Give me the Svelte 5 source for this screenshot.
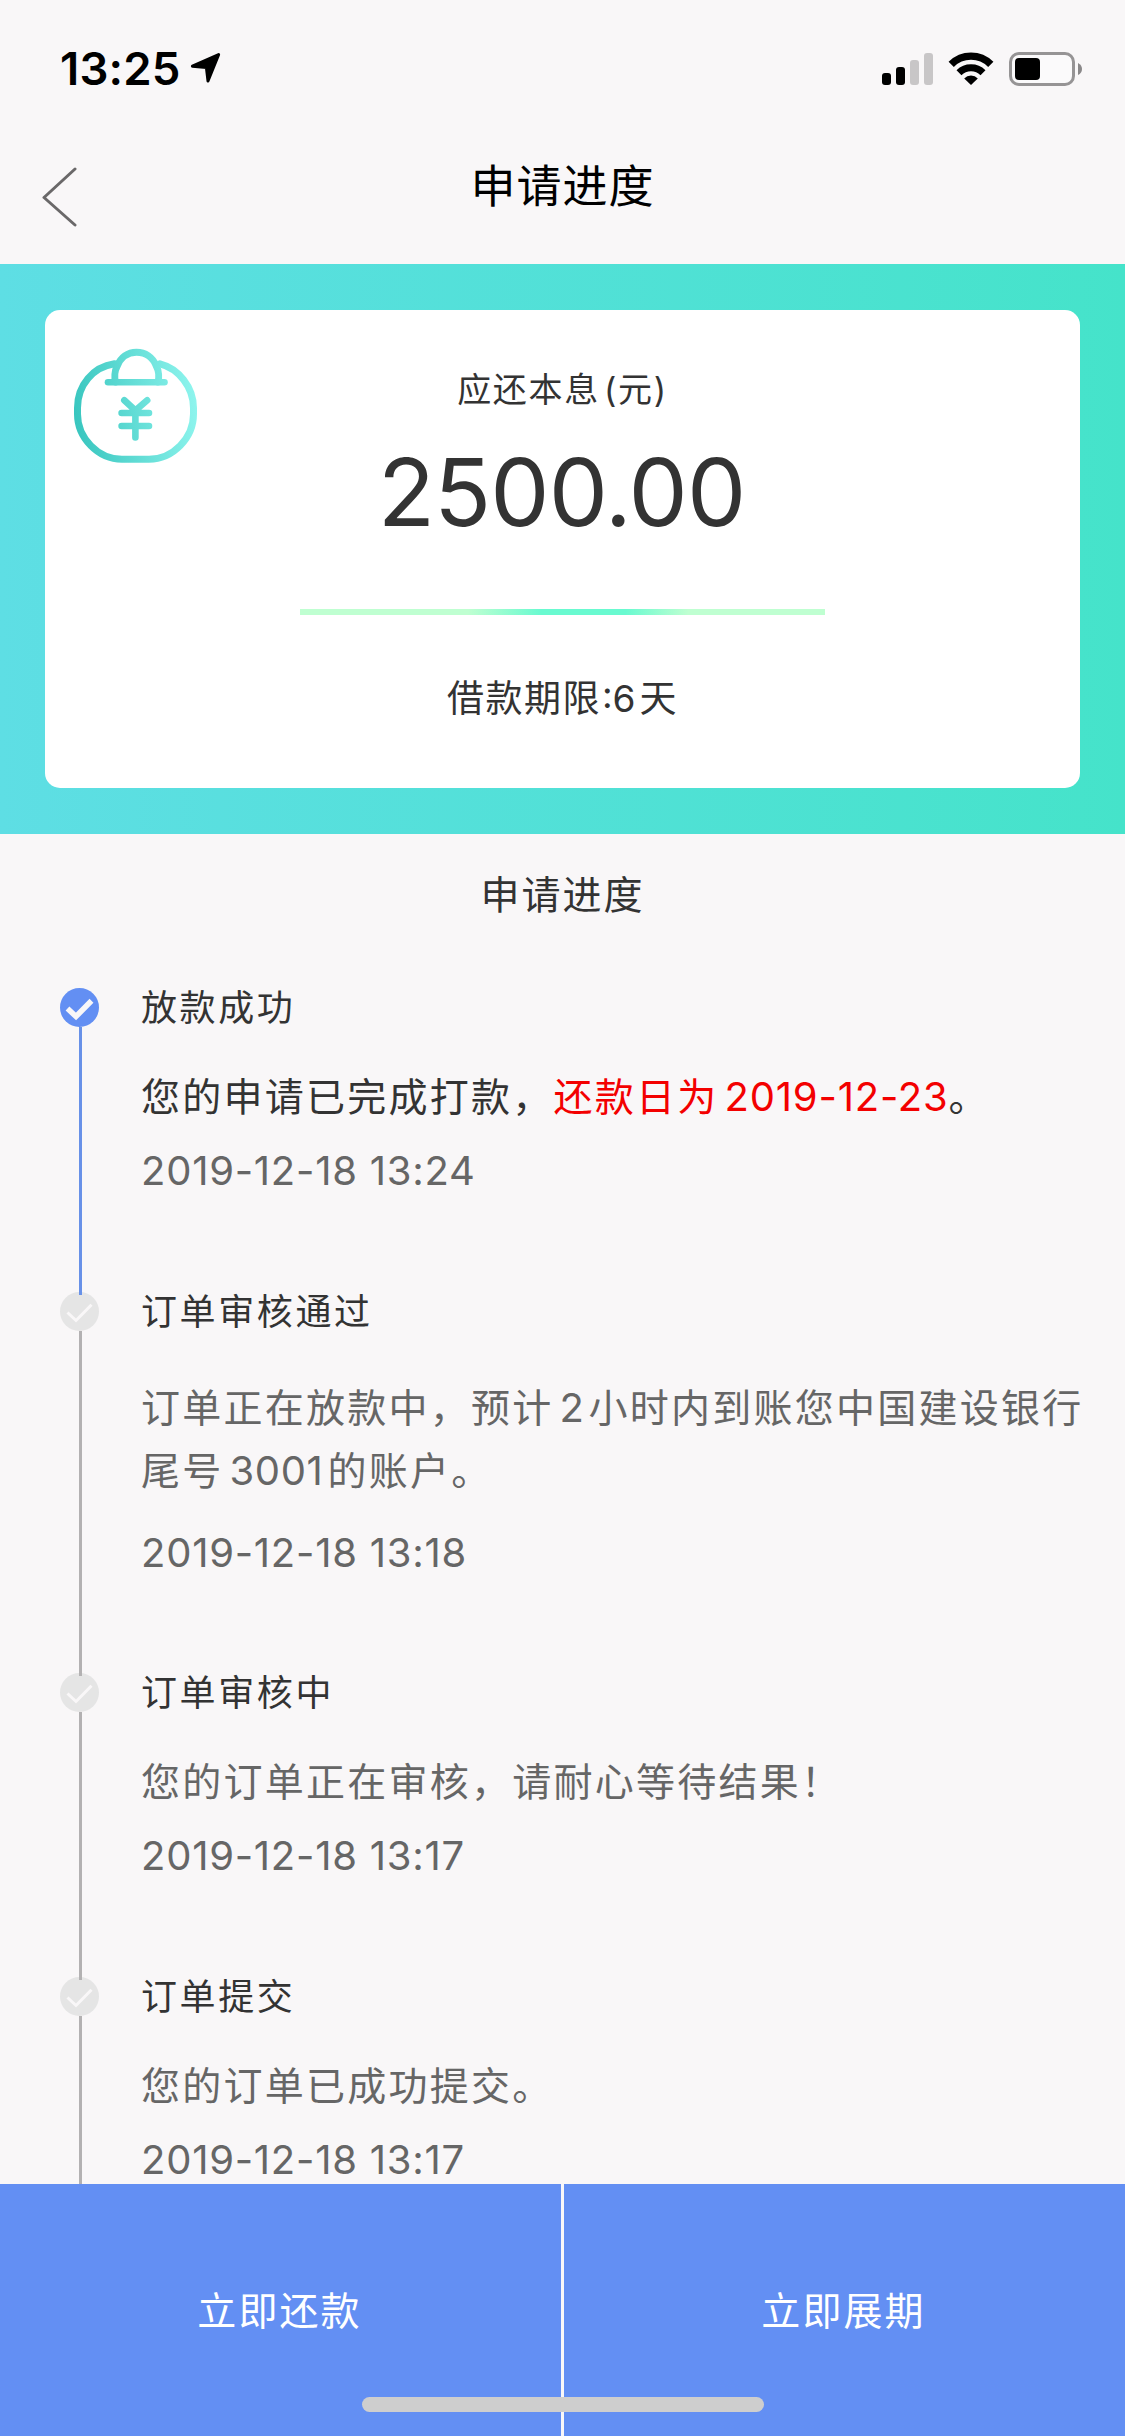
<script>
  const amount = '2500.00';
  const signal = [12, 18, 25, 32];

  const steps = [
    {
      title: '放款成功',
      done: true,
      lines: [
        [
          { text: '您的申请已完成打款，' },
          { text: '还款日为', hot: true },
          { text: '2019-12-23', num: true, hot: true, wide: true },
          { text: '。' }
        ]
      ],
      date: '2019-12-18 13:24'
    },
    {
      title: '订单审核通过',
      lines: [
        [
          { text: '订单正在放款中，预计' },
          { text: '2', num: true },
          { text: '小时内到账您中国建设银行' }
        ],
        [{ text: '尾号' }, { text: '3001', num: true }, { text: '的账户。' }]
      ],
      date: '2019-12-18 13:18'
    },
    {
      title: '订单审核中',
      lines: [[{ text: '您的订单正在审核，请耐心等待结果！' }]],
      date: '2019-12-18 13:17'
    },
    {
      title: '订单提交',
      lines: [[{ text: '您的订单已成功提交。' }]],
      date: '2019-12-18 13:17'
    }
  ];
</script>

<div class="screen" lang="zh-CN">
  <div class="status">
    <div class="clock">
      <span class="time">13:25</span>
      <svg class="locate" width="31" height="31" viewBox="0 0 31 31">
        <path d="M28.6 1.6 L18 28 L16.4 14.6 L2.4 13.2 Z" fill="#000" stroke="#000" stroke-width="3" stroke-linejoin="round" />
      </svg>
    </div>
    <div class="system">
      <div class="signal">
        {#each signal as h, i}
          <i class:off={i > 1} style="height: {h}px"></i>
        {/each}
      </div>
      <svg class="wifi" width="46" height="33" viewBox="0 0 46 33">
        <path d="M3.2 12.3 A28 28 0 0 1 42.8 12.3" fill="none" stroke="#000" stroke-width="7.4" />
        <path d="M11 20.8 A17 17 0 0 1 35 20.8" fill="none" stroke="#000" stroke-width="7" />
        <path d="M23 33 L16.2 26.4 A9.6 9.6 0 0 1 29.8 26.4 Z" fill="#000" />
      </svg>
      <svg class="battery" width="74" height="34" viewBox="0 0 74 34">
        <rect x="1.5" y="1.5" width="63" height="31" rx="8.5" fill="#fbfafb" stroke="#969495" stroke-width="3" />
        <rect x="6" y="6" width="25" height="22" rx="4" fill="#000" />
        <path d="M69 11 Q73 13 73 17 Q73 21 69 23 Z" fill="#8a8889" />
      </svg>
    </div>
  </div>

  <header class="nav">
    <svg class="back" width="36" height="60" viewBox="0 0 36 60">
      <path d="M33 2 L2 30.5 L33 58" fill="none" stroke="#6a6869" stroke-width="3" stroke-linecap="round" stroke-linejoin="round" />
    </svg>
    <h1>申请进度</h1>
  </header>

  <section class="banner">
    <div class="card">
      <svg class="purse" width="124" height="116" viewBox="73 348 124 116">
        <defs>
          <linearGradient id="aqua" gradientUnits="userSpaceOnUse" x1="74" y1="410" x2="197" y2="395">
            <stop offset="0" stop-color="#39c6bf" />
            <stop offset="1" stop-color="#8ff5ee" />
          </linearGradient>
        </defs>
        <g fill="none" stroke="url(#aqua)" stroke-width="7" stroke-linecap="round" stroke-linejoin="round">
          <path d="M114.5 363.8 C93 367 77.500 385 77.500 408 V414 C77.500 438 98 459.200 122 459.200 H149 C173 459.200 193.500 438 193.500 414 V408 C193.500 387 178.500 368.500 160 363.800" />
          <path d="M115.500 382 C114.500 378 114.500 371 117 366.500 C120.500 357 128 352.200 136.500 352.200 C145 352.200 153 357 156.500 366.500 C159 371 159 378 158 382" />
          <path d="M108 382.300 H164.500" stroke-width="6.600" />
          <path d="M124.300 400.300 L135.400 410.500 L147.200 400.300 M121.600 413 H149 M121.600 426 H149 M135.400 411 V437.500" stroke-width="6.600" />
        </g>
      </svg>
      <p class="label">应还本息<span class="paren open">(</span>元<span class="paren">)</span></p>
      <p class="amount">{amount}</p>
      <div class="rule"></div>
      <p class="term">借款期限<span class="num">:6</span>天</p>
    </div>
  </section>

  <h2>申请进度</h2>

  <ol class="timeline">
    {#each steps as step}
      <li class:done={step.done} class:tall={step.lines.length > 1}>
        <div class="rail">
          <svg width="39" height="39" viewBox="0 0 39 39">
            <circle cx="19.5" cy="19.5" r="19.5" />
            <path d="M7.500 20.500 L16 28.500 L31.500 12.800" fill="none" />
          </svg>
          <span class="line"></span>
        </div>
        <div class="body">
          <h3>{step.title}</h3>
          <div class="desc">
            {#each step.lines as line}
              <p>{#each line as part}<span class:num={part.num} class:wide={part.wide} class:hot={part.hot}>{part.text}</span>{/each}</p>
            {/each}
          </div>
          <time>{step.date}</time>
        </div>
      </li>
    {/each}
  </ol>

  <footer>
    <button>立即还款</button>
    <button>立即展期</button>
    <span class="home"></span>
  </footer>
</div>

<style>
  :global(body) {
    margin: 0;
    background: #f9f7f8;
  }
  .screen {
    width: 1125px;
    height: 2436px;
    display: flex;
    flex-direction: column;
    overflow: hidden;
    position: relative;
    background: #f9f7f8;
    color: #333;
    font-family: 'Noto Sans CJK SC', sans-serif;
    font-size: 39px;
  }
  h1, h2, h3, p, ol {
    margin: 0;
    padding: 0;
    font-weight: 400;
  }
  svg {
    display: block;
  }
  .status {
    height: 132px;
    flex: none;
    display: flex;
    justify-content: space-between;
    padding: 0 42px 0 60px;
    box-sizing: border-box;
  }
  .clock {
    display: flex;
    color: #000;
  }
  .time {
    width: 130px;
    margin-top: 42px;
    font: 600 45.500px/54px Inter, sans-serif;
    letter-spacing: 0.2px;
  }
  .locate {
    margin-top: 53px;
  }
  .system {
    display: flex;
    margin-top: 52px;
  }
  .signal {
    display: flex;
    align-items: flex-end;
    gap: 5px;
    height: 33px;
    margin-right: 15px;
  }
  .signal i {
    width: 9px;
    border-radius: 3px;
    background: #000;
  }
  .signal .off {
    background: #c8c6c7;
  }
  .wifi {
    margin-right: 15px;
  }
  .nav {
    height: 132px;
    flex: none;
    display: grid;
    grid-template-columns: 120px 1fr 120px;
  }
  .back {
    margin: 35px 0 0 42px;
  }
  h1 {
    margin-top: 19px;
    text-align: center;
    color: #000;
    font-size: 45px;
    line-height: 66px;
    letter-spacing: 1px;
  }
  .banner {
    height: 570px;
    flex: none;
    box-sizing: border-box;
    padding: 46px 45px;
    background: linear-gradient(90deg, #5edee4, #45e3ca);
  }
  .card {
    height: 478px;
    box-sizing: border-box;
    border-radius: 15px;
    background: #fff;
    display: flex;
    flex-direction: column;
    align-items: center;
    position: relative;
  }
  .purse {
    position: absolute;
    left: 28px;
    top: 38px;
  }
  .label {
    height: 48px;
    margin-top: 54px;
    font-size: 34px;
    line-height: 48px;
    letter-spacing: 1.7px;
  }
  .paren,
  .num {
    font-family: Inter, sans-serif;
    line-height: 1;
  }
  .open {
    margin-left: 4px;
  }
  .amount {
    height: 112px;
    margin-top: 24px;
    font: 400 94px/112px Inter, sans-serif;
    letter-spacing: -0.9px;
    text-indent: -2px;
  }
  .rule {
    width: 525px;
    height: 6px;
    margin-top: 61px;
    background: linear-gradient(90deg, #bfffd1 32%, #69fad0 46%, #69fad0 62%, #bfffd1 74%);
  }
  .term {
    height: 54px;
    margin-top: 54px;
    font-size: 37px;
    line-height: 54px;
    letter-spacing: 1.5px;
  }
  .num {
    letter-spacing: 0.6px;
    margin: 0 4px 0 6px;
  }
  .num.wide {
    letter-spacing: 0.8px;
    margin: 0 0 0 6px;
  }
  .desc .num {
    font-size: 40px;
  }
  .term .num {
    margin: 0 4px 0 1px;
    letter-spacing: 0;
  }
  h2 {
    height: 134px;
    flex: none;
    text-align: center;
    font-size: 39px;
    line-height: 117px;
    letter-spacing: 2px;
  }
  .timeline {
    flex: 1;
    min-height: 0;
    overflow: hidden;
    list-style: none;
    padding-top: 20px;
  }
  li {
    display: flex;
    height: 304px;
  }
  li.tall {
    height: 381px;
  }
  .rail {
    width: 141px;
    flex: none;
    display: flex;
    flex-direction: column;
    padding-left: 60px;
    box-sizing: border-box;
  }
  .rail svg {
    flex: none;
    fill: #e5e5e5;
    stroke: #f9f7f8;
    stroke-width: 3px;
  }
  .rail circle {
    stroke: none;
  }
  .done .rail svg {
    fill: #638ff3;
    stroke-width: 5.500px;
  }
  .line {
    flex: 1;
    width: 3px;
    margin: 0 0 -3px 19px;
    background: #b3b1b2;
    z-index: 1;
  }
  .done .line {
    background: #6891e8;
  }
  .body {
    white-space: nowrap;
  }
  h3 {
    font-size: 36px;
    line-height: 54px;
    margin-top: -10px;
    letter-spacing: 2.6px;
  }
  .desc {
    margin-top: 38px;
    font-size: 39px;
    line-height: 48px;
    letter-spacing: 2.250px;
    color: #666;
  }
  .done .desc {
    color: #333;
  }
  .tall .desc {
    line-height: 63px;
  }
  .desc .hot {
    color: #f30000;
  }
  .desc p {
    height: 48px;
  }
  .tall .desc p {
    height: 63px;
  }
  time {
    display: block;
    margin-top: 29px;
    font: 400 40px/48px Inter, sans-serif;
    letter-spacing: 0.750px;
    color: #666;
  }
  footer {
    height: 252px;
    flex: none;
    display: grid;
    grid-template-columns: 561px 561px;
    gap: 3px;
    position: relative;
    z-index: 2;
    background: #f9f7f8;
  }
  button {
    border: 0;
    padding: 0 2px 4px 0;
    background: #638ff3;
    color: #fff;
    font: inherit;
    letter-spacing: 2.100px;
  }
  .home {
    position: absolute;
    left: 362px;
    bottom: 24px;
    width: 402px;
    height: 15px;
    border-radius: 8px;
    background: #cecece;
  }
</style>
